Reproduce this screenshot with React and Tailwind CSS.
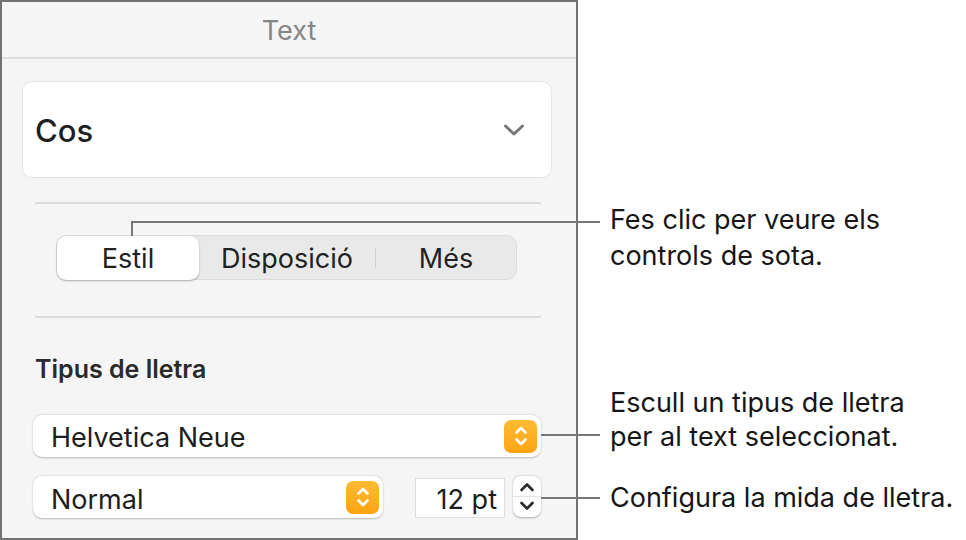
import React from "react";

function Updown({ color = "white", w = 2.6 }) {
  return (
    <svg width="14" height="22" viewBox="0 0 14 22" fill="none">
      <path d="M2.5 7.5 L7 3 L11.5 7.5" stroke={color} strokeWidth={w} strokeLinecap="round" strokeLinejoin="round" />
      <path d="M2.5 14.5 L7 19 L11.5 14.5" stroke={color} strokeWidth={w} strokeLinecap="round" strokeLinejoin="round" />
    </svg>
  );
}

function OrangeBtn() {
  return (
    <div className="w-[33px] h-[33px] rounded-[7px] bg-gradient-to-b from-[#ffbb33] to-[#fda40f] flex items-center justify-center">
      <Updown />
    </div>
  );
}

export default function App() {
  return (
    <div className="relative w-[966px] h-[540px] bg-white flex font-['Inter',sans-serif] text-[#1d1d1d]">
      {/* Panel */}
      <div className="w-[578px] h-[540px] border-2 border-[#727272] bg-[#f5f5f5] flex flex-col shrink-0">
        <div className="h-[57px] pt-[3px] border-b-2 border-[#dedede] flex items-center justify-center text-[27px] text-[#868686]">
          Text
        </div>
        <div className="ml-[20px] mt-[22px] w-[530px] h-[97px] bg-white rounded-[10px] border border-[#e4e4e4] flex items-center justify-between pl-[12px] pr-[26px]">
          <span className="text-[31px] font-medium text-[#1f1f1f] pt-[3px]">Cos</span>
          <svg width="22" height="14" viewBox="0 0 22 14" fill="none">
            <path d="M2.5 3 L11 11 L19.5 3" stroke="#777" strokeWidth="3" strokeLinecap="round" strokeLinejoin="round" />
          </svg>
        </div>
        <div className="ml-[33px] mt-[24px] w-[506px] h-[2px] bg-[#dddddd]" />
        <div className="ml-[54px] mt-[31px] w-[461px] h-[45px] rounded-[10px] bg-[#e9e9e9] border border-[#dcdcdc] flex items-center text-[27px] text-[#222]">
          <div className="w-[142px] h-[44px] pt-[3px] rounded-[9px] bg-white shadow-[0_1px_2px_rgba(0,0,0,0.3)] flex items-center justify-center">
            Estil
          </div>
          <div className="w-[176px] pt-[3px] flex items-center justify-center">Disposició</div>
          <div className="w-px h-[20px] bg-[#cfcfcf]" />
          <div className="flex-1 pt-[3px] flex items-center justify-center">Més</div>
        </div>
        <div className="ml-[33px] mt-[36px] w-[506px] h-[2px] bg-[#dddddd]" />
        <div className="ml-[33px] mt-[37px] h-[30px] flex items-center text-[25px] font-semibold text-[#2a2a2a]">
          Tipus de lletra
        </div>
        <div className="ml-[31px] mt-[30px] w-[508px] h-[42px] bg-white rounded-[9px] shadow-[0_0.5px_2px_rgba(0,0,0,0.25)] flex items-center justify-between pl-[18px] pr-[4px] text-[27px]">
          <span className="pt-[5px]">Helvetica Neue</span>
          <OrangeBtn />
        </div>
        <div className="ml-[31px] mt-[19px] flex items-start">
          <div className="w-[350px] h-[42px] bg-white rounded-[9px] shadow-[0_0.5px_2px_rgba(0,0,0,0.25)] flex items-center justify-between pl-[18px] pr-[4px] text-[27px]">
            <span className="pt-[6px]">Normal</span>
            <OrangeBtn />
          </div>
          <div className="ml-[32px] mt-[2px] w-[90px] h-[40px] pt-[5px] bg-white border border-[#dedede] flex items-center justify-end pr-[7px] text-[27px]">
            12 pt
          </div>
          <div className="ml-[8px] w-[28px] h-[41px] bg-white rounded-[8px] shadow-[0_0.5px_2px_rgba(0,0,0,0.3)] flex flex-col items-center justify-center">
            <svg width="18" height="13" viewBox="0 0 18 13" fill="none">
              <path d="M3.5 9 L9 3.5 L14.5 9" stroke="#2a2a2a" strokeWidth="2.6" strokeLinecap="round" strokeLinejoin="round" />
            </svg>
            <div className="w-full h-px bg-[#e3e3e3] my-[2px]" />
            <svg width="18" height="13" viewBox="0 0 18 13" fill="none">
              <path d="M3.5 4 L9 9.5 L14.5 4" stroke="#2a2a2a" strokeWidth="2.6" strokeLinecap="round" strokeLinejoin="round" />
            </svg>
          </div>
        </div>
      </div>

      {/* Callout texts */}
      <div className="pl-[32px] flex flex-col text-[27px] leading-[36px] text-[#161616] whitespace-nowrap">
        <div className="mt-[202px]">
          Fes clic per veure els
          <br />
          controls de sota.
        </div>
        <div className="mt-[112px] leading-[34px]">
          Escull un tipus de lletra
          <br />
          per al text seleccionat.
        </div>
        <div className="mt-[26px]">Configura la mida de lletra.</div>
      </div>

      {/* Callout lines */}
      <div className="absolute left-[131px] top-[221px] w-[469px] h-[2px] bg-[#777]" />
      <div className="absolute left-[131px] top-[221px] w-[2px] h-[15px] bg-[#777]" />
      <div className="absolute left-[541px] top-[434px] w-[59px] h-[2px] bg-[#777]" />
      <div className="absolute left-[541px] top-[497px] w-[59px] h-[2px] bg-[#777]" />
    </div>
  );
}
